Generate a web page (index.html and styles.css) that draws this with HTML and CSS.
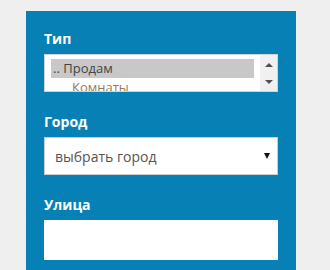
FILE: index.html
```html
<!DOCTYPE html>
<html lang="ru">
<head>
<meta charset="utf-8">
<title>Поиск</title>
<link rel="stylesheet" href="styles.css">
</head>
<body>
<form class="panel">
  <div class="field">
    <div class="label">Тип</div>
    <div class="listbox">
      <div class="options">
        <div class="option selected">.. Продам</div>
        <div class="option sub">Комнаты</div>
      </div>
      <div class="scrollbar">
        <span class="arrow-up"></span>
        <span class="arrow-down"></span>
      </div>
    </div>
  </div>
  <div class="field">
    <div class="label">Город</div>
    <div class="select">
      <span class="select-text">выбрать город</span>
      <span class="select-arrow"></span>
    </div>
  </div>
  <div class="field">
    <div class="label">Улица</div>
    <input class="input" type="text">
  </div>
</form>
</body>
</html>
```
FILE: styles.css
```css
* { box-sizing: border-box; }
body {
  margin: 0;
  background: #efefef;
  font-family: "Open Sans", "DejaVu Sans", sans-serif;
}
.panel {
  margin: 11px 0 0 26px;
  width: 270px;
  padding: 18px 18px 20px;
  background: #0781b5;
}
.field + .field { margin-top: 20px; }
.label {
  color: #fff;
  font-weight: 700;
  font-size: 14px;
  line-height: 20px;
  margin-bottom: 5px;
}
.listbox {
  height: 38px;
  border: 1px solid #d3d3d3;
  background: #fff;
  display: flex;
  overflow: hidden;
}
.options {
  flex: 1;
  padding: 4px 6px 0;
}
.option {
  font-size: 13px;
  line-height: 19px;
  color: #444;
  white-space: nowrap;
}
.selected {
  background: #c8c8c8;
  padding-left: 2px;
  letter-spacing: 0;
}
.sub {
  padding-left: 21px;
  color: #a07850;
}
.scrollbar {
  width: 17px;
  background: #f0f0f0;
  display: flex;
  flex-direction: column;
  justify-content: space-between;
  align-items: center;
  padding: 8px 0 7px;
}
.arrow-up, .arrow-down {
  width: 0;
  height: 0;
  border-left: 4px solid transparent;
  border-right: 4px solid transparent;
}
.arrow-up { border-bottom: 4px solid #505050; }
.arrow-down { border-top: 4px solid #505050; }
.select {
  height: 38px;
  border: 1px solid #ccc;
  background: #fff;
  display: flex;
  align-items: center;
  justify-content: space-between;
  padding: 0 7px 0 10px;
}
.select-text {
  font-size: 14px;
  color: #555;
}
.select-arrow {
  width: 0;
  height: 0;
  border-left: 3px solid transparent;
  border-right: 3px solid transparent;
  border-top: 6px solid #111;
}
.input {
  display: block;
  width: 100%;
  height: 40px;
  border: 0;
  margin: 0;
  background: #fff;
}
```
